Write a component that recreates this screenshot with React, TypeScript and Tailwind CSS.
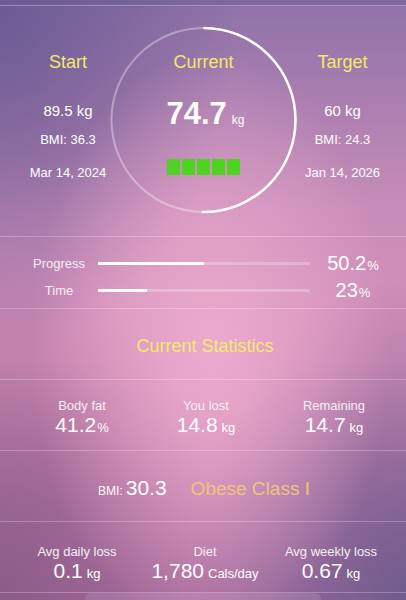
import React from "react";

const font = "font-['Liberation_Sans','Helvetica_Neue',Arial,sans-serif]";

function Val({ v, u, size = "text-[21px]", uSize = "text-[13px]", gap = "ml-[4px]" }: { v: string; u: string; size?: string; uSize?: string; gap?: string }) {
  return (
    <div className="flex items-baseline justify-center text-white">
      <span className={`${size} leading-[24px]`}>{v}</span>
      <span className={`${uSize} ${gap}`}>{u}</span>
    </div>
  );
}

function Stat({ label, v, u, w, gap }: { label: string; v: string; u: string; w: string; gap?: string }) {
  return (
    <div className={`${w} flex flex-col items-center`}>
      <div className="text-[13px] leading-[15px] text-[#f6eff5]">{label}</div>
      <Val v={v} u={u} gap={gap} />
    </div>
  );
}

function Bar({ pct }: { pct: number }) {
  return (
    <div className="w-[212px] h-[3px] bg-white/25">
      <div className="h-full bg-white" style={{ width: `${pct}%` }} />
    </div>
  );
}

export default function App() {
  const r = 92;
  const c = 2 * Math.PI * r;
  return (
    <div
      className={`${font} relative w-[406px] h-[600px] overflow-hidden bg-[radial-gradient(ellipse_at_52%_58%,rgba(236,172,206,0.95)_0%,rgba(232,166,202,0)_60%),radial-gradient(ellipse_at_0%_0%,#6c5b93_0%,rgba(108,91,147,0)_42%),radial-gradient(ellipse_at_100%_100%,#705c8e_0%,rgba(112,92,142,0)_38%),radial-gradient(ellipse_at_0%_100%,#8c5c88_0%,rgba(140,92,136,0)_40%),linear-gradient(180deg,#8e72a8_0%,#c88cb8_35%,#d890ba_60%,#aa6c9e_100%)]`}
    >
      <div className="h-[6px] border-b border-white/30 bg-[#6e5b93]/40" />

      {/* top: start / current / target */}
      <div className="relative h-[231px] border-b border-white/25">
        <svg
          className="absolute left-[108px] top-[19px]"
          width="190"
          height="190"
          viewBox="0 0 190 190"
        >
          <circle cx="95.5" cy="95" r={r} fill="none" stroke="rgba(255,255,255,0.35)" strokeWidth="2" />
          <circle
            cx="95.5"
            cy="95"
            r={r}
            fill="none"
            stroke="#fff"
            strokeWidth="2.5"
            strokeDasharray={`${c * 0.502} ${c}`}
            transform="rotate(-90 95.5 95)"
          />
        </svg>

        <div className="relative grid grid-cols-[136px_135px_1fr] pt-[45px]">
          <div className="flex flex-col items-center">
            <div className="text-[18px] leading-[22px] text-[#f4e96c]">Start</div>
            <div className="mt-[29px] text-[15px] leading-[18px] text-white">89.5 kg</div>
            <div className="mt-[12px] text-[13px] leading-[16px] text-white">BMI: 36.3</div>
            <div className="mt-[17px] text-[13px] leading-[16px] text-white">Mar 14, 2024</div>
          </div>
          <div className="flex flex-col items-center">
            <div className="text-[18px] leading-[22px] text-[#f4e96c]">Current</div>
            <div className="mt-[24px] flex items-baseline text-white pl-[4px]">
              <span className="text-[31px] leading-[34px] font-bold">74.7</span>
              <span className="ml-[5px] text-[12px]">kg</span>
            </div>
            <div className="mt-[28px] flex gap-[2px]">
              {[0, 1, 2, 3, 4].map((i) => (
                <div key={i} className="w-[13px] h-[16px] bg-[#4fd322]" />
              ))}
            </div>
          </div>
          <div className="flex flex-col items-center pl-[8px]">
            <div className="text-[18px] leading-[22px] text-[#f4e96c]">Target</div>
            <div className="mt-[29px] text-[15px] leading-[18px] text-white">60 kg</div>
            <div className="mt-[12px] text-[13px] leading-[16px] text-white">BMI: 24.3</div>
            <div className="mt-[17px] text-[13px] leading-[16px] text-white">Jan 14, 2026</div>
          </div>
        </div>
      </div>

      {/* progress */}
      <div className="h-[72px] border-b border-white/25 pt-[13px] pl-[20px]">
        <div className="flex items-center h-[27px]">
          <div className="w-[78px] text-center text-[13px] text-[#f6eff5]">Progress</div>
          <Bar pct={50.2} />
          <div className="w-[86px]">
            <Val v="50.2" u="%" size="text-[20px]" gap="ml-[1px]" />
          </div>
        </div>
        <div className="flex items-center h-[27px]">
          <div className="w-[78px] text-center text-[13px] text-[#f6eff5]">Time</div>
          <Bar pct={23} />
          <div className="w-[86px]">
            <Val v="23" u="%" size="text-[20px]" gap="ml-[1px]" />
          </div>
        </div>
      </div>

      <div className="h-[71px] border-b border-white/25 flex items-center justify-center pt-[4px] pl-[4px]">
        <span className="text-[18px] text-[#f6ea6e]">Current Statistics</span>
      </div>

      <div className="h-[71px] border-b border-white/25 flex pl-[20px] pt-[18px]">
        <Stat label="Body fat" v="41.2" u="%" w="w-[124px]" gap="ml-[1px]" />
        <Stat label="You lost" v="14.8" u="kg" w="w-[124px]" />
        <Stat label="Remaining" v="14.7" u="kg" w="w-[132px]" />
      </div>

      <div className="h-[71px] border-b border-white/25 flex items-center justify-center pt-[4px] pl-[2px]">
        <div className="flex items-baseline text-white">
          <span className="text-[12px]">BMI:</span>
          <span className="ml-[3px] text-[21px]">30.3</span>
          <span className="ml-[24px] text-[19px] text-[#ecc67c]">Obese Class I</span>
        </div>
      </div>

      <div className="h-[71px] border-b border-white/25 flex pt-[22px]">
        <Stat label="Avg daily loss" v="0.1" u="kg" w="w-[154px]" />
        <Stat label="Diet" v="1,780" u="Cals/day" w="w-[102px]" />
        <Stat label="Avg weekly loss" v="0.67" u="kg" w="w-[150px]" />
      </div>
      <div className="mx-[85px] h-[8px] bg-white/10 rounded-t-[6px]" />
    </div>
  );
}
